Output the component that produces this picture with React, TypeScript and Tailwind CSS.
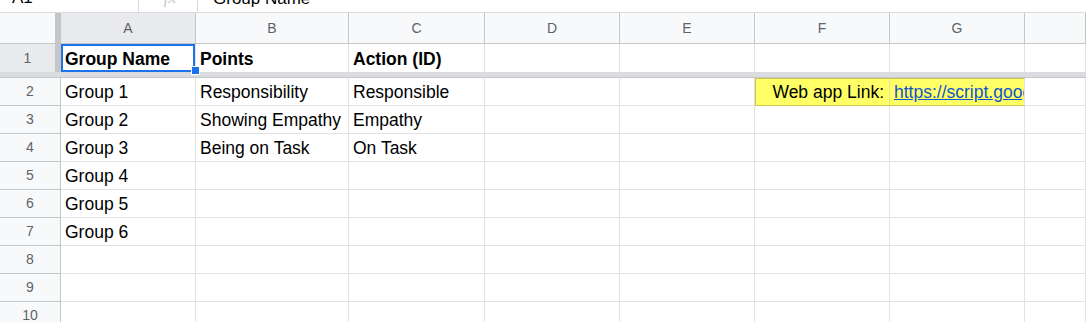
import type { ReactNode } from 'react'

const font = { fontFamily: '"Liberation Sans", Arial, sans-serif' }

const COLS = ['A', 'B', 'C', 'D', 'E', 'F', 'G', '']
const GRID = 'grid grid-cols-[61px_135px_153px_136px_135px_135px_135px_135px_1fr]'

const rows: string[][] = [
  ['Group 1', 'Responsibility', 'Responsible'],
  ['Group 2', 'Showing Empathy', 'Empathy'],
  ['Group 3', 'Being on Task', 'On Task'],
  ['Group 4'],
  ['Group 5'],
  ['Group 6'],
  [],
  [],
  [],
]

function Cell({ children, className = '' }: { children?: ReactNode; className?: string }) {
  return (
    <div
      className={`flex h-[28px] items-end overflow-hidden whitespace-nowrap border-b border-r border-[#e2e2e2] pb-[3px] pl-[4px] text-[17.5px] leading-[20px] text-black ${className}`}
    >
      {children}
    </div>
  )
}

function RowHead({ n }: { n: number }) {
  return (
    <div className="flex h-[28px] items-center justify-center border-b border-r border-[#c4c7c5] bg-[#f8f9fa] text-[14px] text-[#5f6368]">
      {n}
    </div>
  )
}

export default function App() {
  return (
    <div className="h-[322px] w-[1086px] overflow-hidden bg-white" style={font}>
      {/* formula bar, mostly scrolled off */}
      <div className="flex h-[13px] overflow-hidden border-b border-[#dadce0]">
        <div className="w-[138px] pl-[12px] text-[17px] leading-[20px] text-black -mt-[12px]">A1</div>
        <div className="w-px bg-[#dadce0]" />
        <div className="flex w-[58px] justify-center pl-[4px] text-[17px] italic leading-[20px] text-[#c8c8c8] -mt-[12px]" style={{ fontFamily: '"Liberation Serif", serif' }}>
          fx
        </div>
        <div className="w-px bg-[#dadce0]" />
        <div className="pl-[15px] text-[17px] leading-[20px] text-black -mt-[11px]">Group Name</div>
      </div>

      {/* column headers */}
      <div className={GRID}>
        <div className="flex h-[31px] border-b border-[#c4c7c5] bg-[#f8f9fa]">
          <div className="flex-1" />
          <div className="w-[6px] bg-[#c4c7c5]" />
        </div>
        {COLS.map((c, i) => (
          <div
            key={i}
            className={`flex h-[31px] items-center justify-center border-b border-r border-[#c4c7c5] text-[14px] text-[#5f6368] ${
              c === 'A' ? 'bg-[#e8eaed]' : 'bg-[#f8f9fa]'
            }`}
          >
            {c}
          </div>
        ))}
      </div>

      {/* frozen row 1 */}
      <div className={GRID}>
        <div className="flex h-[28px] bg-[#e8eaed]">
          <div className="flex flex-1 items-center justify-center text-[14px] text-[#5f6368]">1</div>
          <div className="w-[6px] bg-[#c4c7c5]" />
        </div>
        <div className="relative flex h-[28px] items-end whitespace-nowrap border-r border-[#e2e2e2] pb-[3px] pl-[4px] text-[17.5px] font-bold leading-[20px]">
          Group Name
          <div className="absolute inset-0 border-2 border-[#1a73e8]" />
          <div className="absolute left-[130px] top-[22px] z-10 h-[9px] w-[9px] border border-white bg-[#1a73e8]" />
        </div>
        <div className="flex h-[28px] items-end whitespace-nowrap border-r border-[#e2e2e2] pb-[3px] pl-[4px] text-[17.5px] font-bold leading-[20px]">
          Points
        </div>
        <div className="flex h-[28px] items-end whitespace-nowrap border-r border-[#e2e2e2] pb-[3px] pl-[4px] text-[17.5px] font-bold leading-[20px]">
          Action (ID)
        </div>
        {[0, 1, 2, 3, 4].map((i) => (
          <div key={i} className="h-[28px] border-r border-[#e2e2e2]" />
        ))}
      </div>
      <div className="h-[6px] border-b border-[#c4c7c5] bg-[#dadce0]" />

      {/* body rows */}
      {rows.map((r, i) => (
        <div key={i} className={GRID}>
          <RowHead n={i + 2} />
          <Cell>{r[0]}</Cell>
          <Cell>{r[1]}</Cell>
          <Cell>{r[2]}</Cell>
          <Cell />
          <Cell />
          {i === 0 ? (
            <>
              <Cell className="justify-end border-y border-l border-b-[#c8c850] border-r-[#e4e49a] border-y-[#c8c850] border-l-[#c8c850] bg-[#ffff66] pr-[5px]">
                Web app Link:
              </Cell>
              <Cell className="border-y border-b-[#c8c850] border-y-[#c8c850] bg-[#ffff66]">
                <span className="text-[#1155cc] underline">https://script.google.com/macros/s/AKfycb/exec</span>
              </Cell>
            </>
          ) : (
            <>
              <Cell />
              <Cell />
            </>
          )}
          <Cell />
        </div>
      ))}
    </div>
  )
}
